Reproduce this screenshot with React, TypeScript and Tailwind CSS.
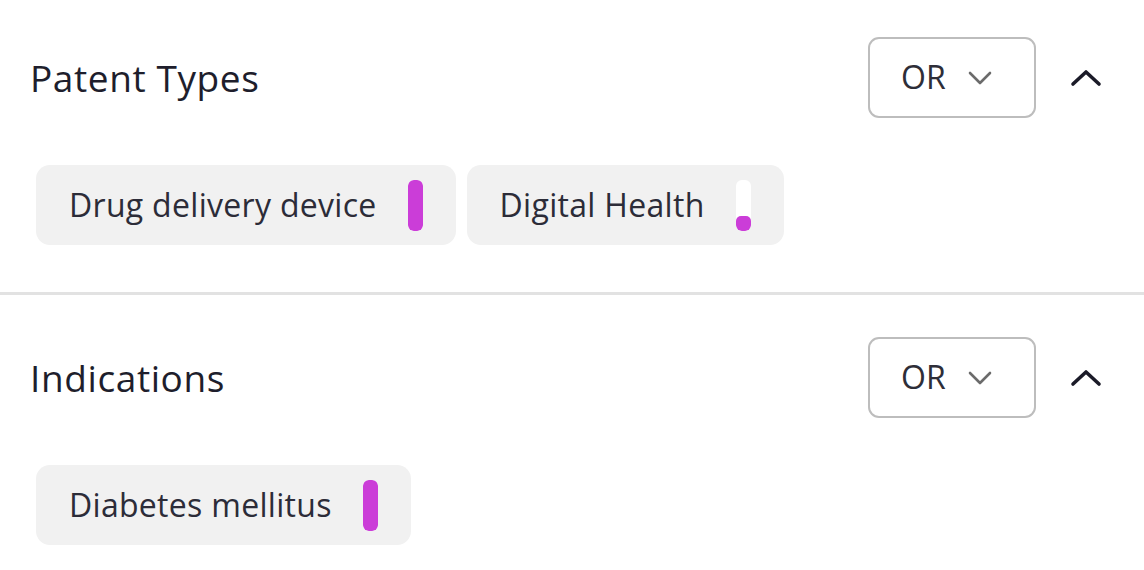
import React from 'react';

interface Chip {
  label: string;
  pct: number;
}

interface Section {
  title: string;
  chips: Chip[];
}

const SECTIONS: Section[] = [
  {
    title: 'Patent Types',
    chips: [
      { label: 'Drug delivery device', pct: 100 },
      { label: 'Digital Health', pct: 28 },
    ],
  },
  {
    title: 'Indications',
    chips: [{ label: 'Diabetes mellitus', pct: 100 }],
  },
];

const ChevronDown = () => (
  <svg width="24" height="14" viewBox="0 0 24 14" fill="none">
    <path d="M2 2l10 10L22 2" stroke="#6b6b6b" strokeWidth="2.6" strokeLinecap="round" strokeLinejoin="round" />
  </svg>
);

const ChevronUp = () => (
  <svg width="32" height="18" viewBox="0 0 32 18" fill="none">
    <path d="M3 15L16 3l13 12" stroke="#1b1b28" strokeWidth="3.6" strokeLinecap="round" strokeLinejoin="round" />
  </svg>
);

const FilterChip: React.FC<{ chip: Chip }> = ({ chip }) => (
  <div className="h-[80px] flex items-center gap-[31px] pl-[33px] pr-[33px] bg-[#f1f1f1] rounded-[14px]">
    <span className="text-[32px] tracking-[0.3px] text-[#2c2c38] leading-none">{chip.label}</span>
    <div className="w-[15px] h-[51px] bg-white rounded-[6px] overflow-hidden flex flex-col justify-end">
      <div className="w-full bg-[#cb3dd8] rounded-[5px]" style={{ height: `${chip.pct}%` }} />
    </div>
  </div>
);

const FilterSection: React.FC<{ section: Section; top: string }> = ({ section, top }) => (
  <div className={`${top} pb-[47px]`}>
    <div className="flex items-center justify-between pl-[30px] pr-[38px]">
      <h3 className="text-[37px] tracking-[0.6px] text-[#1e1e2c] leading-none">{section.title}</h3>
      <div className="flex items-center gap-[30px]">
        <button className="w-[168px] h-[81px] border-2 border-[#bdbdbd] rounded-[11px] flex items-center justify-start gap-[22px] pl-[31px]">
          <span className="text-[32px] text-[#2e2e38] leading-none pb-[2px]">OR</span>
          <ChevronDown />
        </button>
        <button className="w-[40px] h-[40px] flex items-center justify-center">
          <ChevronUp />
        </button>
      </div>
    </div>
    <div className="flex gap-[11px] px-[36px] mt-[47px]">
      {section.chips.map(c => (
        <FilterChip key={c.label} chip={c} />
      ))}
    </div>
  </div>
);

export default function App() {
  return (
    <div className="w-[1144px] h-[570px] bg-white overflow-hidden font-['Open_Sans',sans-serif]">
      <FilterSection section={SECTIONS[0]} top="pt-[37px]" />
      <div className="h-[3px] bg-[#e2e2e2]" />
      <FilterSection section={SECTIONS[1]} top="pt-[42px]" />
    </div>
  );
}
